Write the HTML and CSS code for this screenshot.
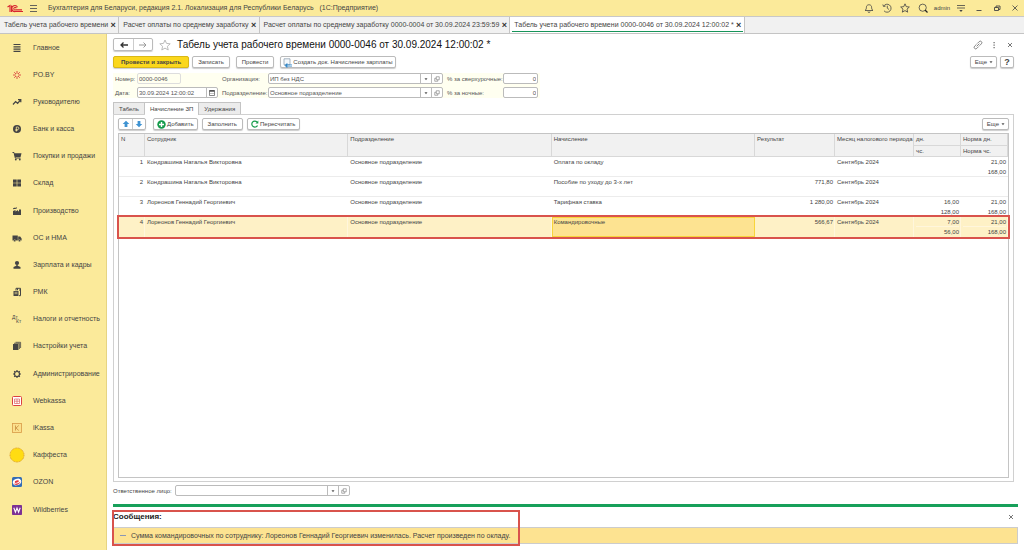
FILE: index.html
```html
<!DOCTYPE html>
<html lang="ru">
<head>
<meta charset="utf-8">
<title>Табель учета рабочего времени</title>
<link rel="stylesheet" href="styles.css">
</head>
<body>
<svg class="sprite" aria-hidden="true">
  <symbol id="open" viewBox="0 0 8 8"><path d="M3 1h4v4H3zM3 3H1v4h4V5" fill="none" stroke="#777" stroke-width=".8"/></symbol>
  <symbol id="down" viewBox="0 0 8 8"><path d="M2 3h4L4 5.500z" fill="#555"/></symbol>
  <symbol id="star" viewBox="0 0 12 12"><path d="M6 1l1.500 3.400 3.700.4-2.800 2.500.8 3.700L6 9.100 2.800 11l.8-3.700L.8 4.800l3.700-.4z" fill="none" stroke="currentColor"/></symbol>
</svg>
<header class="topbar">
  <svg class="logo" viewBox="0 0 16 9"><path d="M.5 3L3 1.500V8M4.500 1.500V8M10.500 3.200A3 3 0 1 0 8.500 7.500H16M9.300 4.200A1.300 1.300 0 1 0 8.500 5.900H15" fill="none" stroke="#d8242f" stroke-width="1.100"/></svg>
  <button class="icon-btn" aria-label="Меню"><svg class="i9" viewBox="0 0 9 9"><path d="M1 1.500h7M1 4.500h7M1 7.500h7" stroke="#555" stroke-width=".9"/></svg></button>
  <span class="app-title">Бухгалтерия для Беларуси, редакция 2.1. Локализация для Республики Беларусь &nbsp; (1С:Предприятие)</span>
  <div class="top-tools">
    <button class="icon-btn" aria-label="Уведомления"><svg class="i10" viewBox="0 0 10 10"><path d="M1 7.500c1.500-1 1.200-2 1.500-4C3 1.200 7 1.200 7.500 3.500c.3 2 0 3 1.500 4zM4 8.500a1 1 0 0 0 2 0" fill="none" stroke="#444" stroke-width=".8"/></svg></button>
    <button class="icon-btn" aria-label="История"><svg class="i10" viewBox="0 0 10 10"><path d="M1.600 3.200A4 4 0 1 1 2 7.800M.8 1.500l.8 2 2-.4M5.300 2.700V5.200L7 6.500" fill="none" stroke="#444" stroke-width=".8"/></svg></button>
    <button class="icon-btn" aria-label="Избранное"><svg class="i10"><use href="#star"/></svg></button>
    <button class="icon-btn" aria-label="Поиск"><svg class="i10" viewBox="0 0 10 10"><circle cx="4.700" cy="4.700" r="3.600" fill="none" stroke="#444" stroke-width=".8"/><path d="M7 7l2.500 2.500" stroke="#222" stroke-width="1.200"/></svg></button>
    <span class="user">admin</span>
    <button class="icon-btn" aria-label="Настройка"><svg class="i10" viewBox="0 0 10 10"><path d="M1 2.500h8M1 5h8" stroke="#444" stroke-width=".8"/><path d="M3.300 7h3.400L5 9z" fill="#444"/></svg></button>
    <button class="icon-btn" aria-label="Свернуть"><svg class="i8" viewBox="0 0 8 8"><path d="M1.500 6.500h5" stroke="#444" stroke-width=".9"/></svg></button>
    <button class="icon-btn" aria-label="Восстановить"><svg class="i8" viewBox="0 0 8 8"><path d="M1.500 3.500h4v3h-4zM3 3.500V2h4v3.500H5.500" fill="none" stroke="#444" stroke-width=".9"/></svg></button>
    <button class="icon-btn" aria-label="Закрыть"><svg class="i8" viewBox="0 0 8 8"><path d="M1.500 1.500l5 5M6.500 1.500l-5 5" stroke="#444" stroke-width=".8"/></svg></button>
  </div>
</header>
<nav class="windows" aria-label="Открытые окна">
  <div class="win"><a href="#">Табель учета рабочего времени</a><button class="x" aria-label="Закрыть">×</button></div>
  <div class="win"><a href="#">Расчет оплаты по среднему заработку</a><button class="x" aria-label="Закрыть">×</button></div>
  <div class="win"><a href="#">Расчет оплаты по среднему заработку 0000-0004 от 30.09.2024 23:59:59</a><button class="x" aria-label="Закрыть">×</button></div>
  <div class="win current"><a href="#">Табель учета рабочего времени 0000-0046 от 30.09.2024 12:00:02 *</a><button class="x" aria-label="Закрыть">×</button></div>
</nav>
<div class="workspace">
  <nav class="sections" aria-label="Разделы">
    <a href="#"><svg viewBox="0 0 10 10"><path d="M1.500 1.500h7M1.500 3.800h7M1.500 6.100h7M1.500 8.400h7" stroke="#444" stroke-width="1.200"/></svg>Главное</a>
    <a href="#"><svg viewBox="0 0 10 10"><path d="M5 3.800V1M5 6.200V9M3.800 5H1M6.200 5H9M4 4L2.200 2.200M6 4l1.800-1.800M4 6L2.200 7.800M6 6l1.800 1.800" stroke="#d9443f" stroke-width=".9"/></svg>PO.BY</a>
    <a href="#"><svg viewBox="0 0 10 10"><path d="M1 7.500l2.600-3 2 1.800L8.500 3M6 2.700h2.800v2.500" fill="none" stroke="#444" stroke-width="1.200"/></svg>Руководителю</a>
    <a href="#"><svg viewBox="0 0 10 10"><circle cx="5" cy="5" r="4" fill="#444"/><path d="M4.300 7.500V3h1.300a1.200 1.200 0 0 1 0 2.500H3.500M3.500 6.500h2" fill="none" stroke="#fbea9a" stroke-width=".8"/></svg>Банк и касса</a>
    <a href="#"><svg viewBox="0 0 10 10"><path d="M.5 1.500H2L3.300 7H8.500" fill="none" stroke="#444"/><path d="M2.300 2.300H9.500L8.600 6H3.200z" fill="#444"/><circle cx="3.800" cy="8.500" r=".9" fill="#444"/><circle cx="7.800" cy="8.500" r=".9" fill="#444"/></svg>Покупки и продажи</a>
    <a href="#"><svg viewBox="0 0 10 10"><path d="M1 1.500h3.700v3.200H1zM5.300 1.500H9v3.200H5.300zM1 5.300h3.700v3.200H1zM5.300 5.300H9v3.200H5.300z" fill="#444"/></svg>Склад</a>
    <a href="#"><svg viewBox="0 0 10 10"><path d="M1 9V5l2.500-1v1.500L6 4v1.500L7 5V3.500h2V9zM1 2.500c1-1.500 2 0 4-1.300v1c-1.500 1.200-2.500.3-4 1z" fill="#444"/></svg>Производство</a>
    <a href="#"><svg viewBox="0 0 10 10"><path d="M.5 2.500h5.300v5H.5zM6.200 3.500h2L9.600 5.500v2H6.200z" fill="#444"/><circle cx="2.700" cy="7.700" r="1.100" fill="#444" stroke="#fbea9a" stroke-width=".4"/><circle cx="7.500" cy="7.700" r="1.100" fill="#444" stroke="#fbea9a" stroke-width=".4"/></svg>ОС и НМА</a>
    <a href="#"><svg viewBox="0 0 10 10"><circle cx="5" cy="3" r="2.100" fill="#444"/><path d="M4.300 4.500h1.400v1.300L8.500 7v1.700h-7V7l2.800-1.200z" fill="#444"/></svg>Зарплата и кадры</a>
    <a href="#"><svg viewBox="0 0 10 10"><path d="M1.500 4h5v5h-5z" fill="#444"/><path d="M4 3.500V1.300h4.500V8.700H7M5.500 1.300v2M7 3h1.500" fill="none" stroke="#444"/><path d="M2.500 5.300h3M2.500 6.700h3" stroke="#fbea9a" stroke-width=".6"/></svg>РМК</a>
    <a href="#"><svg viewBox="0 0 10 10"><text x="0" y="5" class="glyph">Дт</text><text x="4" y="9" class="glyph">Кт</text></svg>Налоги и отчетность</a>
    <a href="#"><svg viewBox="0 0 10 10"><path d="M1 3h5.500v6H1z" fill="#444"/><path d="M2 2.300H7.400V8M3.500 1.300H8.600V7" fill="none" stroke="#444" stroke-width=".8"/></svg>Настройки учета</a>
    <a href="#"><svg viewBox="0 0 10 10"><circle cx="5" cy="5" r="2.500" fill="none" stroke="#444" stroke-width="1.200"/><path d="M5 1v1.500M5 7.500V9M1 5h1.500M7.500 5H9M2.200 2.200l1 1M6.800 6.800l1 1M7.800 2.200l-1 1M3.200 6.800l-1 1" stroke="#444" stroke-width="1.200"/></svg>Администрирование</a>
    <a href="#"><svg viewBox="0 0 10 10"><rect x=".5" y=".5" width="9" height="9" rx="1" fill="#fff" stroke="#dc4040"/><path d="M2.500 3h5v4.500h-5zM2.500 5.200h5M5 3v4.500" fill="none" stroke="#dc6060" stroke-width=".7"/></svg>Webkassa</a>
    <a href="#"><svg viewBox="0 0 10 10"><rect x=".5" y=".5" width="9" height="9" fill="#fbe08c" stroke="#d89b48" stroke-width=".8"/><path d="M3.500 2.500v5M6.800 2.500L4 5l2.800 2.500" fill="none" stroke="#c58b3c" stroke-width=".8"/></svg>iKassa</a>
    <a href="#"><svg class="sun" viewBox="0 0 16 16"><circle cx="8" cy="8" r="7" fill="#ffdc12" stroke="#dda029" stroke-dasharray="1 .6"/></svg>Каффеста</a>
    <a href="#"><svg viewBox="0 0 10 10"><rect width="10" height="10" rx="1.500" fill="#336cb5"/><ellipse cx="5" cy="5" rx="4.300" ry="3.200" fill="#fff" transform="rotate(-20 5 5)"/><path d="M1.500 6.500c1.500 2.500 6 1.500 7-2-2 2-4.500 2.500-7 2z" fill="#e23840"/><ellipse cx="5" cy="4.500" rx="2.200" ry="1.100" fill="#e23840" transform="rotate(-20 5 5)"/></svg>OZON</a>
    <a href="#"><svg viewBox="0 0 10 10"><rect width="10" height="10" rx=".8" fill="#7c3194"/><path d="M1.800 2.800l1.600 4.400L5 3l1.600 4.200 1.600-4.400" fill="none" stroke="#fff" stroke-width="1.100"/></svg>Wildberries</a>
  </nav>
  <main class="form">
    <div class="heading">
      <div class="history"><button aria-label="Назад"><svg class="i10" viewBox="0 0 10 10"><path d="M9 5H2M4.500 2.500L2 5l2.500 2.500" fill="none" stroke="#333" stroke-width="1.300"/></svg></button><button aria-label="Вперед"><svg class="i10" viewBox="0 0 10 10"><path d="M1 5h7M5.500 2.500L8 5 5.500 7.500" fill="none" stroke="#999"/></svg></button></div>
      <button class="icon-btn fav" aria-label="В избранное"><svg><use href="#star"/></svg></button>
      <h1>Табель учета рабочего времени 0000-0046 от 30.09.2024 12:00:02 *</h1>
      <div class="form-tools">
        <button class="icon-btn" aria-label="Ссылка"><svg class="i10" viewBox="0 0 10 10"><path d="M4.300 3.500l1.900-1.900a1.500 1.500 0 0 1 2.200 2.200L6.500 5.700M5.700 6.500L3.800 8.400a1.500 1.500 0 0 1-2.200-2.200l1.900-1.900M3.600 6.400l2.800-2.800" fill="none" stroke="#666" stroke-width=".8"/></svg></button>
        <button class="icon-btn" aria-label="Меню формы"><svg class="i8" viewBox="0 0 8 8"><path d="M3.500 1h1.200v1.300H3.500zM3.500 3.500h1.200v1.300H3.500zM3.500 6h1.200v1.300H3.500z" fill="#666"/></svg></button>
        <button class="icon-btn" aria-label="Закрыть форму"><svg class="i8" viewBox="0 0 8 8"><path d="M2 2l4 4M6 2L2 6" stroke="#555" stroke-width=".8"/></svg></button>
      </div>
    </div>
    <div class="commands">
      <button class="btn primary">Провести и закрыть</button>
      <button class="btn">Записать</button>
      <button class="btn gap">Провести</button>
      <button class="btn gap doc"><svg class="i9" viewBox="0 0 9 9"><path d="M1 .8h6v6H1z" fill="#f4f8fb" stroke="#8296a8" stroke-width=".7"/><path d="M3 6.800h6M4 8.200h5M2 7.500l2-2v4z" fill="#3186c8" stroke="#3186c8" stroke-width=".7"/></svg>Создать док. Начисление зарплаты</button>
      <span class="spacer"></span>
      <button class="btn more">Еще<svg class="i6"><use href="#down"/></svg></button>
      <button class="btn help">?</button>
    </div>
    <div class="fields">
      <label for="num">Номер:</label>
      <div><input id="num" class="input locked" value="0000-0046" readonly></div>
      <label for="org">Организация:</label>
      <div class="combo"><input id="org" value="ИП без НДС"><button aria-label="Выбрать"><svg class="i6"><use href="#down"/></svg></button><button aria-label="Открыть"><svg class="i6"><use href="#open"/></svg></button></div>
      <label for="over">% за сверхурочные:</label>
      <input id="over" class="input num" value="0">
      <label for="date">Дата:</label>
      <div class="combo"><input id="date" value="30.09.2024 12:00:02"><button aria-label="Календарь"><svg class="i8" viewBox="0 0 8 8"><path d="M1.500 1.500h5v5h-5z" fill="none" stroke="#555" stroke-width=".7"/><path d="M1.500 1.200h5v1.500h-5z" fill="#444"/><path d="M2 4.500h4" stroke="#999" stroke-width=".6"/></svg></button></div>
      <label for="dep">Подразделение:</label>
      <div class="combo"><input id="dep" value="Основное подразделение"><button aria-label="Выбрать"><svg class="i6"><use href="#down"/></svg></button><button aria-label="Открыть"><svg class="i6"><use href="#open"/></svg></button></div>
      <label for="night">% за ночные:</label>
      <input id="night" class="input num" value="0">
    </div>
    <div class="pages" role="tablist">
      <button role="tab">Табель</button><button role="tab" aria-selected="true">Начисление ЗП</button><button role="tab">Удержания</button>
    </div>
    <section class="page">
      <div class="table-tools">
        <div class="move"><button aria-label="Вверх"><svg class="i8" viewBox="0 0 8 8"><path d="M4 .8L7.300 4H5.400v3H2.600V4H.7z" fill="#3f93d2"/></svg></button><button aria-label="Вниз"><svg class="i8" viewBox="0 0 8 8"><path d="M4 7.200L7.300 4H5.400V1H2.600v3H.7z" fill="#3f93d2"/></svg></button></div>
        <button class="btn with-icon"><svg class="i9" viewBox="0 0 9 9"><circle cx="4.500" cy="4.500" r="4.200" fill="#169b4b"/><path d="M4.500 2v5M2 4.500h5" stroke="#fff" stroke-width="1.400"/></svg>Добавить</button>
        <button class="btn">Заполнить</button>
        <button class="btn with-icon"><svg class="i8" viewBox="0 0 8 8"><path d="M6.500 5.500A3 3 0 1 1 6 2" fill="none" stroke="#169b4b" stroke-width="1.200"/><path d="M7.300.5v3H4.500z" fill="#169b4b"/></svg>Пересчитать</button>
        <span class="spacer"></span>
        <button class="btn more">Еще<svg class="i6"><use href="#down"/></svg></button>
      </div>
      <div class="grid">
        <table>
          <colgroup><col class="c-n"><col><col><col><col class="c-sum"><col class="c-month"><col class="c-hours"><col class="c-hours"></colgroup>
          <thead>
            <tr><th rowspan="2">N</th><th rowspan="2">Сотрудник</th><th rowspan="2">Подразделение</th><th rowspan="2">Начисление</th><th rowspan="2">Результат</th><th rowspan="2">Месяц налогового периода</th><th>дн.</th><th>Норма дн.</th></tr>
            <tr><th>чс.</th><th>Норма чс.</th></tr>
          </thead>
          <tbody>
            <tr><td class="r">1</td><td>Кондрашина Наталья Викторовна</td><td>Основное подразделение</td><td>Оплата по окладу</td><td class="r"></td><td>Сентябрь 2024</td><td class="r"></td><td class="r"><div>21,00</div><div>168,00</div></td></tr>
            <tr><td class="r">2</td><td>Кондрашина Наталья Викторовна</td><td>Основное подразделение</td><td>Пособие по уходу до 3-х лет</td><td class="r">771,80</td><td>Сентябрь 2024</td><td class="r"></td><td class="r"></td></tr>
            <tr><td class="r">3</td><td>Лореонов Геннадий Георгиевич</td><td>Основное подразделение</td><td>Тарифная ставка</td><td class="r">1 280,00</td><td>Сентябрь 2024</td><td class="r"><div>16,00</div><div>128,00</div></td><td class="r"><div>21,00</div><div>168,00</div></td></tr>
            <tr class="selected"><td class="r">4</td><td>Лореонов Геннадий Георгиевич</td><td>Основное подразделение</td><td class="active">Командировочные</td><td class="r">566,67</td><td>Сентябрь 2024</td><td class="r"><div>7,00</div><div>56,00</div></td><td class="r"><div>21,00</div><div>168,00</div></td></tr>
          </tbody>
        </table>
      </div>
    </section>
    <div class="responsible">
      <label for="resp">Ответственное лицо:</label>
      <div class="combo"><input id="resp"><button aria-label="Выбрать"><svg class="i6"><use href="#down"/></svg></button><button aria-label="Открыть"><svg class="i6"><use href="#open"/></svg></button></div>
    </div>
    <section class="messages">
      <div class="msg-head"><h2>Сообщения:</h2><button class="icon-btn" aria-label="Закрыть сообщения"><svg class="i8" viewBox="0 0 8 8"><path d="M2 2l4 4M6 2L2 6" stroke="#555" stroke-width=".8"/></svg></button></div>
      <div class="msg"><span class="dash"></span>Сумма командировочных по сотруднику: Лореонов Геннадий Георгиевич изменилась. Расчет произведен по окладу.</div>
      <div class="frame"></div>
    </section>
  </main>
</div>
</body>
</html>
```
FILE: styles.css
```css
* { box-sizing: border-box; }
body { margin: 0; min-height: 100vh; display: flex; flex-direction: column; background: #fff; color: #444; font: 7px/10px "Liberation Sans", Arial, sans-serif; }
button, input { font: inherit; color: inherit; margin: 0; padding: 0; border: 0; background: none; border-radius: 0; min-width: 0; }
a { color: inherit; text-decoration: none; }
h1, h2 { margin: 0; }
svg { display: block; flex: none; overflow: visible; }
.sprite { position: absolute; width: 0; height: 0; }
.i6 { width: 6px; height: 6px; }
.i8 { width: 8px; height: 8px; }
.i9 { width: 9px; height: 9px; }
.i10 { width: 10px; height: 10px; }
.icon-btn { display: flex; align-items: center; justify-content: center; }
.spacer { flex: 1; }

.topbar { display: flex; align-items: center; height: 16px; padding: 0 0 0 7px; background: #fbea9a; }
.logo { width: 16px; height: 9px; margin-right: 6px; }
.app-title { margin-left: 10px; }
.top-tools { display: flex; align-items: center; margin-left: auto; color: #444; }
.top-tools .icon-btn { width: 18px; }
.user { width: 20px; text-align: center; font-size: 6px; }

.windows { display: flex; height: 18px; background: #f1f1f1; border-top: 1px solid #c8c8c8; border-bottom: 1px solid #c4c4c4; }
.win { display: flex; align-items: center; gap: 2px; padding: 0 2px 0 4px; border-right: 1px solid #c4c4c4; white-space: nowrap; }
.win.current { background: linear-gradient(#17945a, #17945a) center bottom 1px / calc(100% - 3px) 1px no-repeat #fff; }
.x { width: 6px; font-size: 9px; font-weight: bold; color: #333; }

.workspace { flex: 1; display: flex; }
.sections { width: 107px; flex: none; display: flex; flex-direction: column; padding-bottom: 27px; background: #fbea9a; border-right: 1px solid #e6d482; }
.sections a { flex: 1; display: flex; align-items: center; gap: 11px; padding-left: 12px; white-space: nowrap; }
.sections svg { width: 10px; height: 10px; }
.sections .sun { width: 16px; height: 16px; margin: 0 -3px; }
.glyph { font-size: 5px; fill: #444; }

.form { flex: 1; min-width: 0; display: flex; flex-direction: column; padding: 4px 6px 6px 6px; font-size: 6px; }
.heading { display: flex; align-items: center; height: 13px; padding-right: 1px; }
.history, .move { display: flex; border: 1px solid #bbb; border-radius: 2px; box-shadow: 0 1px 1px #ccc; }
.history button { width: 19px; height: 11px; display: flex; align-items: center; justify-content: center; }
.history button + button, .move button + button { border-left: 1px solid #ccc; }
.fav { margin: 0 6px; color: #bbb; }
.fav svg { width: 12px; height: 12px; }
h1 { font-size: 10px; line-height: 13px; font-weight: normal; color: #111; white-space: nowrap; }
.form-tools { display: flex; margin-left: auto; gap: 1px; }
.form-tools .icon-btn { width: 15px; }

.commands { display: flex; gap: 3px; margin: 5px 4px 5px 0; }
.btn { display: flex; align-items: center; justify-content: center; gap: 1px; height: 12px; padding: 0 5px; background: #fff; border: 1px solid #bbb; border-radius: 2px; box-shadow: 0 1px 1px #ccc; white-space: nowrap; }
.btn.gap { margin-left: 3px; }
.btn.with-icon { padding: 0 3px; }
.btn.doc { padding: 0 2px; }
.btn.more { padding: 0 2px 0 4px; }
.btn.primary { padding: 0 7px; font-weight: bold; background: #fbd71c; border-color: #d9b816; }
.help { width: 14px; font-weight: bold; font-size: 9px; }

.fields { align-self: flex-start; display: grid; grid-template-columns: 18px 81px 42px 175px 52px 35px; column-gap: 4px; row-gap: 3px; padding: 0 2px; align-items: center; background: #fffff0; color: #555; white-space: nowrap; }
.input, .combo { display: flex; width: 100%; height: 11px; background: #fff; border: 1px solid #bbb; border-radius: 2px; }
.input { padding: 0 1px; }
.combo input { flex: 1; padding: 0 1px; }
.combo button { width: 11px; display: flex; align-items: center; justify-content: center; border-left: 1px solid #bbb; }
.input.locked { width: 44px; background: #fffff0; border-color: #ddd; }
.num { text-align: right; }

.pages { display: flex; margin-top: 4px; }
.pages button { height: 12px; padding: 0 5px; background: #ececec; border: 1px solid #c4c4c4; border-left-width: 0; border-bottom-width: 0; }
.pages button:first-child { border-left-width: 1px; }
.pages button[aria-selected] { position: relative; height: 13px; background: #fff; margin-bottom: -1px; }
.page { flex: 1; display: flex; flex-direction: column; margin-right: 4px; padding: 3px 4px; border: 1px solid #d0d0d0; }
.table-tools { display: flex; gap: 4px; margin-bottom: 3px; }
.move { margin-right: 3px; }
.move button { width: 13px; height: 10px; display: flex; align-items: center; justify-content: center; }
.grid { flex: 1; border: 1px solid #c4c4c4; }
table { width: 100%; table-layout: fixed; border-collapse: separate; border-spacing: 0; line-height: 10px; }
.c-n { width: 26px; }
.c-sum { width: 80px; }
.c-month { width: 79px; }
.c-hours { width: 47px; }
th, td { padding: 0 2px; vertical-align: top; text-align: left; font-weight: normal; white-space: nowrap; overflow: hidden; }
th { height: 11px; padding-top: 1px; line-height: 9px; background: #f1f1f1; border-right: 1px solid #d8d8d8; border-bottom: 1px solid #d8d8d8; }
thead tr:first-child th { height: 12px; }
td { height: 20px; box-shadow: inset 0 -1px #ececec; }
.r { text-align: right; }
.selected { outline: 2px solid #d9534c; }
.selected td { background: #fef1c6; box-shadow: inset -1px 0 #fff6dc; }
.selected td.active { background: #fde391; box-shadow: inset 0 0 0 1px #f8d43a; }
.selected div + div { box-shadow: 0 -1px #fff6dc; }

.responsible { display: flex; align-items: center; gap: 3px; margin: 3px 0 8px; white-space: nowrap; }
.responsible .combo { width: 175px; }
.messages { position: relative; border-top: 3px solid #17a05a; font-size: 7px; }
.msg-head { display: flex; align-items: center; justify-content: space-between; height: 20px; padding-right: 3px; }
h2 { font-size: 8px; line-height: 10px; color: #222; }
.msg { display: flex; align-items: center; height: 17px; padding-left: 6px; background: #fde391; border: 1px solid #ccc; white-space: nowrap; }
.dash { width: 6px; height: 1px; margin-right: 5px; background: #8a97b5; }
.frame { position: absolute; top: 3px; bottom: -2px; left: -1px; width: 408px; border: 2px solid #d9534c; pointer-events: none; }
```
